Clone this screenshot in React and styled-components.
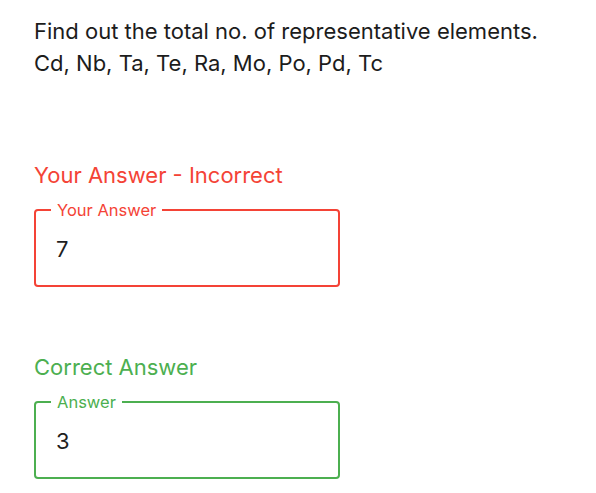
import React from 'react'
import styled, { createGlobalStyle } from 'styled-components'

const GlobalStyle = createGlobalStyle`
    body {
        margin: 0;
        background: #fff;
        font-family: Inter, "Noto Sans", sans-serif;
        color: #1a1a1a;
    }
`

const Page = styled.div`
    padding: 15px 35px 0 34px;
`

const Question = styled.p`
    margin: 0;
    font-size: 22px;
    line-height: 32px;
    color: #1c1c1c;
`

const Block = styled.section`
    margin-top: ${props => props.gap}px;
`

const Heading = styled.h3`
    margin: 0;
    font-weight: 400;
    font-size: 22px;
    line-height: 28px;
    color: ${props => props.color};
`

const Field = styled.fieldset`
    margin: 12px 0 0 0;
    width: 306px;
    height: 86px;
    box-sizing: border-box;
    border: 2px solid ${props => props.color};
    border-radius: 4px;
    padding: 0 20px;

    legend {
        padding: 0 6px;
        margin-left: -5px;
        font-size: 16.5px;
        line-height: 18px;
        color: ${props => props.color};
    }
`

const Value = styled.div`
    font-size: 22px;
    line-height: 24px;
    margin-top: 18px;
    color: #1f1f1f;
`

const AnswerBox = ({ title, label, value, color, gap }) => (
    <Block gap={gap}>
        <Heading color={color}>{title}</Heading>
        <Field color={color}>
            <legend>{label}</legend>
            <Value>{value}</Value>
        </Field>
    </Block>
)

const App = () => {
    return (
        <Page>
            <GlobalStyle />
            <Question>
                Find out the total no. of representative elements.<br />
                Cd, Nb, Ta, Te, Ra, Mo, Po, Pd, Tc
            </Question>

            <AnswerBox gap={82} title='Your Answer - Incorrect' label='Your Answer' value='7' color='#f44336' />
            <AnswerBox gap={66} title='Correct Answer' label='Answer' value='3' color='#4caf50' />
        </Page>
    )
}

export default App
